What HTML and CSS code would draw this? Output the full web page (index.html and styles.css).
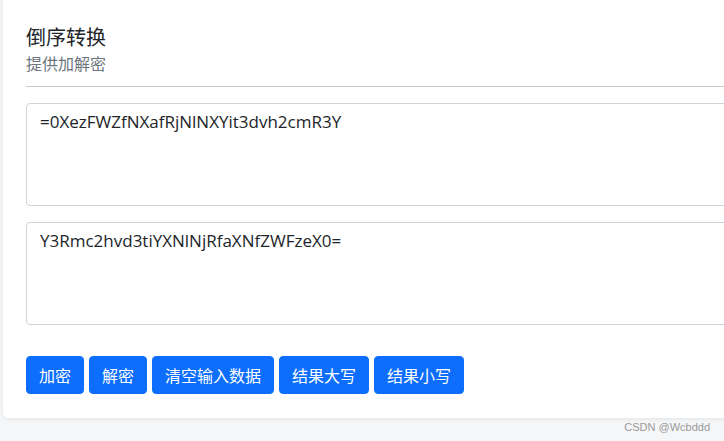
FILE: index.html
```html
<!DOCTYPE html>
<html lang="zh-CN">
<head>
  <meta charset="UTF-8" />
  <meta name="viewport" content="width=device-width, initial-scale=1.0" />
  <title>倒序转换</title>
  <link rel="stylesheet" href="styles.css">
</head>
<body>

  <div class="card">
    <h5 class="card-title">倒序转换</h5>
    <div class="card-sub">提供加解密</div>
    <hr />
    <textarea class="form-control" id="input">=0XezFWZfNXafRjNlNXYit3dvh2cmR3Y</textarea>
    <textarea class="form-control" id="output">Y3Rmc2hvd3tiYXNlNjRfaXNfZWFzeX0=</textarea>
    <div class="btns">
      <button class="btn">加密</button>
      <button class="btn">解密</button>
      <button class="btn">清空输入数据</button>
      <button class="btn">结果大写</button>
      <button class="btn">结果小写</button>
    </div>
  </div>

  <div class="mark">CSDN @Wcbddd</div>

</body>
</html>
```

FILE: styles.css
```css
body {
  margin: 0;
  background: #f5f6f8;
  font-family: "Open Sans", "Noto Sans CJK SC", sans-serif;
  color: #212529;
  overflow: hidden;
  height: 441px;
}

.card {
  margin-left: 3px;
  width: 780px;
  background: #fff;
  border-radius: 0 0 5px 5px;
  box-shadow: 0 1px 4px rgba(0, 0, 0, 0.08);
  padding: 25px 23px 24px;
  box-sizing: border-box;
}

.card-title {
  margin: 0;
  font-size: 20px;
  font-weight: normal;
  line-height: 24px;
  font-family: "Noto Sans CJK SC", sans-serif;
}

.card-sub {
  margin-top: 2px;
  font-size: 16px;
  line-height: 24px;
  color: #6c757d;
  font-family: "Noto Sans CJK SC", sans-serif;
}

hr {
  margin: 11px 0 16px;
  border: 0;
  border-top: 1px solid #c8c8c8;
}

.form-control {
  display: block;
  width: 100%;
  height: 103px;
  box-sizing: border-box;
  margin: 0 0 16px;
  padding: 6px 13px;
  font: 17px/24px "Open Sans", "Noto Sans CJK SC", sans-serif;
  color: #212529;
  border: 1px solid #cfd3d7;
  border-radius: 4px;
  resize: none;
  outline: none;
}

.btns {
  display: flex;
  gap: 5px;
  margin-top: 31px;
}

.btn {
  background: #0d6efd;
  color: #fff;
  border: 1px solid #0d6efd;
  border-radius: 4px;
  padding: 6px 12px;
  font: 16px/24px "Noto Sans CJK SC", sans-serif;
}

.mark {
  text-align: right;
  padding-right: 14px;
  margin-top: 3px;
  font: 11px "Liberation Sans", sans-serif;
  color: #9a9a9a;
}
```
